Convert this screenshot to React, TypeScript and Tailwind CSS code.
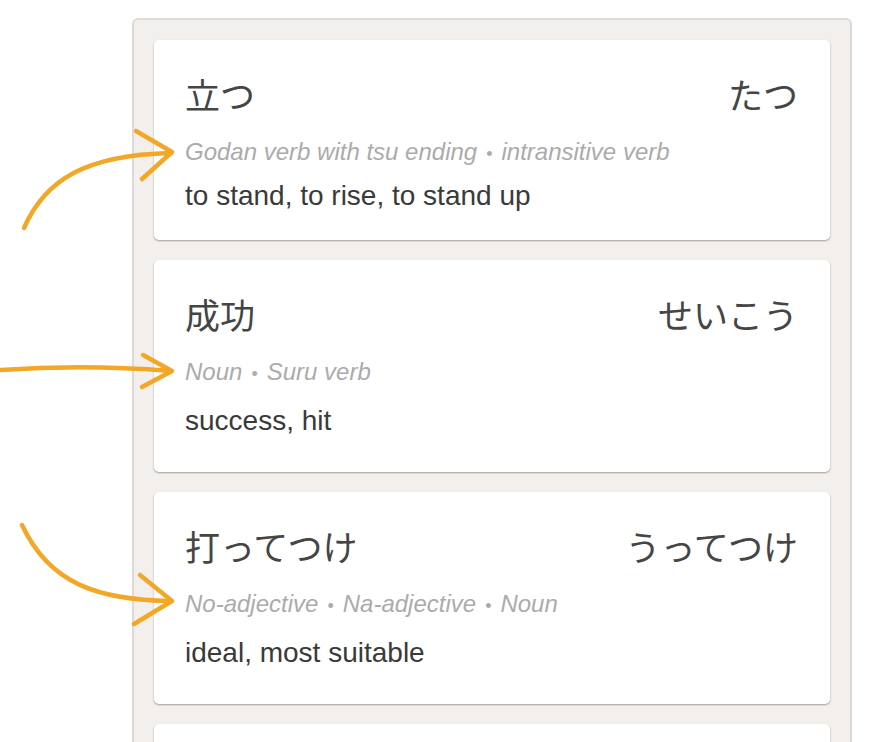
const cards = [
  {
    word: "立つ",
    reading: "たつ",
    tags: ["Godan verb with tsu ending", "intransitive verb"],
    meaning: "to stand, to rise, to stand up",
    tight: true,
  },
  {
    word: "成功",
    reading: "せいこう",
    tags: ["Noun", "Suru verb"],
    meaning: "success, hit",
    tight: false,
  },
  {
    word: "打ってつけ",
    reading: "うってつけ",
    tags: ["No-adjective", "Na-adjective", "Noun"],
    meaning: "ideal, most suitable",
    tight: false,
  },
];

function Arrows() {
  return (
    <svg
      className="pointer-events-none absolute left-0 top-0"
      width="200"
      height="742"
      viewBox="0 0 200 742"
      fill="none"
      stroke="#f2a826"
      strokeWidth="4.5"
      strokeLinecap="round"
      strokeLinejoin="round"
    >
      {/* top arrow, curving up */}
      <path d="M24 228 C 45 180, 85 155, 171 153" />
      <path d="M136 131 L172 152 L142 179" />
      {/* middle arrow, straight */}
      <path d="M1 370 C 60 366, 120 367, 171 371" />
      <path d="M143 355 L172 371 L142 387" />
      {/* bottom arrow, curving down */}
      <path d="M22 525 C 50 585, 100 600, 171 601" />
      <path d="M140 575 L172 601 L134 624" />
    </svg>
  );
}

export default function App() {
  return (
    <div className="relative h-[742px] w-[872px] overflow-hidden bg-white [font-family:'Liberation_Sans',Arial,sans-serif]">
      <div className="ml-[132px] mt-[18px] w-[720px] rounded-t-[6px] border-2 border-b-0 border-[#dedad7] bg-[#f2efec] px-5 pt-5 pb-10">
        <div className="flex flex-col gap-5">
          {cards.map((card) => (
            <div
              key={card.word}
              className={`rounded-[5px] bg-white pl-[31px] pr-[32px] pt-[34px] shadow-[0_1px_2px_rgba(0,0,0,0.35)] ${
                card.tight ? "pb-[28px]" : "pb-[35px]"
              }`}
            >
              <div className="flex items-center justify-between [font-family:'Noto_Sans_CJK_JP',sans-serif] text-[35px] leading-[40px] text-[#454545]">
                <span>{card.word}</span>
                <span>{card.reading}</span>
              </div>
              <div className="mt-[24px] h-[28px] text-[24px] italic leading-[28px] text-[#ababab]">
                {card.tags.map((tag, i) => (
                  <span key={tag}>
                    {i > 0 && (
                      <span className="px-[9px] text-[18px] not-italic leading-none">•</span>
                    )}
                    {tag}
                  </span>
                ))}
              </div>
              <div
                className={`text-[28px] leading-[32px] text-[#3a3a3a] ${
                  card.tight ? "mt-[14px]" : "mt-[19px]"
                }`}
              >
                {card.meaning}
              </div>
            </div>
          ))}
          <div className="h-[120px] rounded-[5px] bg-white shadow-[0_1px_2px_rgba(0,0,0,0.35)]" />
        </div>
      </div>
      <Arrows />
    </div>
  );
}
